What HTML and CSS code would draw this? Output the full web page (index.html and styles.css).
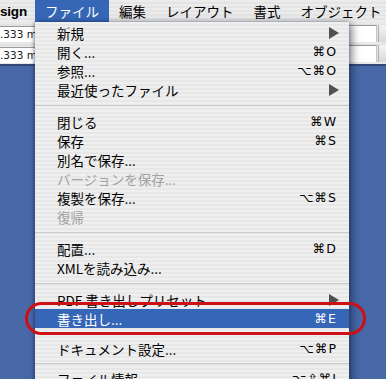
FILE: index.html
```html
<!doctype html>
<html lang="ja">
	<head>
		<meta charset="utf-8">
		<title>InDesign ファイルメニュー</title>
		<link rel="stylesheet" href="styles.css">
	</head>
	<body>
		<div class="screen">
			<header class="menubar">
				<span class="app-name">sign</span>
				<span class="menu-title active">ファイル</span>
				<span class="menu-title">編集</span>
				<span class="menu-title">レイアウト</span>
				<span class="menu-title">書式</span>
				<span class="menu-title">オブジェクト</span>
			</header>

			<div class="control-bar">
				<div class="field-column">
					<div class="field">.333 mm</div>
					<div class="field">.333 mm</div>
				</div>
				<div class="field-column right">
					<div class="spin"><div class="field short"></div><div class="stepper"></div></div>
					<div class="spin"><div class="field short"></div><div class="stepper"></div></div>
				</div>
			</div>

			<div class="dropdown">
				<div class="item"><span>新規</span><span class="arrow"></span></div>
				<div class="item"><span>開く...</span><span class="key">⌘O</span></div>
				<div class="item"><span>参照...</span><span class="key">⌥⌘O</span></div>
				<div class="item"><span>最近使ったファイル</span><span class="arrow"></span></div>
				<div class="sep"></div>
				<div class="item"><span>閉じる</span><span class="key">⌘W</span></div>
				<div class="item"><span>保存</span><span class="key">⌘S</span></div>
				<div class="item"><span>別名で保存...</span></div>
				<div class="item disabled"><span>バージョンを保存...</span></div>
				<div class="item"><span>複製を保存...</span><span class="key">⌥⌘S</span></div>
				<div class="item disabled"><span>復帰</span></div>
				<div class="sep"></div>
				<div class="item"><span>配置...</span><span class="key">⌘D</span></div>
				<div class="item"><span>XMLを読み込み...</span></div>
				<div class="sep"></div>
				<div class="item"><span>PDF 書き出しプリセット</span><span class="arrow"></span></div>
				<div class="item selected"><span>書き出し...</span><span class="key">⌘E</span></div>
				<div class="sep narrow"></div>
				<div class="item"><span>ドキュメント設定...</span><span class="key">⌥⌘P</span></div>
				<div class="sep narrow"></div>
				<div class="item"><span>ファイル情報...</span><span class="key">⌥⇧⌘I</span></div>
			</div>

			<div class="callout"></div>
		</div>
	</body>
</html>
```

FILE: styles.css
```css
html, body {
	margin: 0;
	width: 100%;
	height: 100%;
}

body {
	font-family: "Noto Sans CJK JP", "Noto Sans", sans-serif;
	background-color: #4868a8;
	overflow: hidden;
}

.screen {
	position: relative;
	width: 386px;
	height: 379px;
	overflow: hidden;
	background-color: #4868a8;
}

/* menu bar */

.menubar {
	display: flex;
	align-items: center;
	height: 22px;
	background: repeating-linear-gradient(to bottom, #ececec 0, #ececec 2px, #e4e4e4 2px, #e4e4e4 4px);
	font-size: 13.5px;
	color: #000;
}

.app-name {
	flex-shrink: 0;
	width: 35px;
	font-family: "Liberation Sans", sans-serif;
	font-weight: bold;
	font-size: 13.5px;
	letter-spacing: -0.2px;
	white-space: nowrap;
}

.menu-title {
	flex-shrink: 0;
	padding: 0 10px;
	height: 22px;
	line-height: 22px;
	white-space: nowrap;
}

.menu-title.active {
	background-color: #3667b6;
	color: #fff;
	width: 54px;
}

/* control panel behind the menu */

.control-bar {
	display: flex;
	justify-content: space-between;
	height: 42px;
	background: repeating-linear-gradient(to bottom, #e9e9e9 0, #e9e9e9 2px, #e1e1e1 2px, #e1e1e1 4px);
	border-bottom: 2px solid #33497a;
}

.field-column {
	display: flex;
	flex-direction: column;
	gap: 5px;
	padding-top: 4px;
}

.field {
	height: 15px;
	width: 50px;
	background: #fff;
	border-top: 1px solid #9a9a9a;
	border-right: 1px solid #c4c4c4;
	font-family: "DejaVu Sans", sans-serif;
	font-size: 10.5px;
	line-height: 15px;
	color: #222;
	white-space: nowrap;
}

.field-column.right {
	padding-top: 3px;
	gap: 3px;
}

.spin {
	display: flex;
	gap: 1px;
}

.field.short {
	width: 28px;
	height: 16px;
	border-left: 1px solid #c4c4c4;
}

.stepper {
	width: 7px;
	height: 17px;
	background: linear-gradient(to bottom, #f4f4f4, #d8d8d8);
	border-left: 1px solid #b0b0b0;
}

/* file menu */

.dropdown {
	position: absolute;
	left: 35px;
	top: 22px;
	width: 314px;
	height: 380px;
	padding-top: 1px;
	background: repeating-linear-gradient(to bottom, #efefef 0, #efefef 2px, #e7e7e7 2px, #e7e7e7 4px);
	box-shadow: 3px 2px 8px rgba(10, 20, 50, 0.55), -1px 0 3px rgba(10, 20, 50, 0.35);
	font-size: 13.5px;
	color: #000;
}

.item {
	display: flex;
	justify-content: space-between;
	align-items: center;
	height: 19px;
	padding: 0 12px 0 22px;
	white-space: nowrap;
}

.item.disabled {
	color: #a2a2a2;
}

.item.selected {
	background-color: #3566b7;
	color: #fff;
}

.key {
	font-family: "DejaVu Sans", sans-serif;
	font-size: 12.5px;
	letter-spacing: 1px;
}

.arrow {
	width: 0;
	height: 0;
	margin-right: -2px;
	border-left: 10px solid #505050;
	border-top: 6px solid transparent;
	border-bottom: 6px solid transparent;
}

.sep {
	height: 1px;
	margin: 6px 0;
	background-color: #c9c9c9;
}

.sep.narrow {
	margin: 5px 0;
}

/* red marker around the export item */

.callout {
	position: absolute;
	left: 25px;
	top: 302px;
	width: 335px;
	height: 27px;
	border: 3px solid #cc1016;
	border-radius: 17px;
}
```
